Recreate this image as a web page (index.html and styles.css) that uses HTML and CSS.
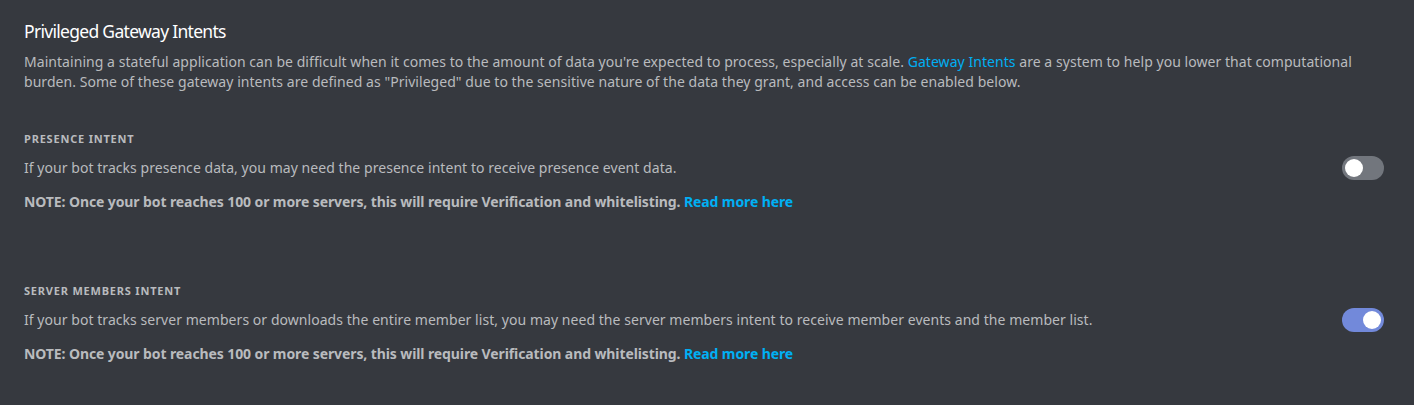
FILE: index.html
```html
<!DOCTYPE html>
<html>
<head>
<meta charset="utf-8">
<link rel="stylesheet" href="styles.css">
</head>
<body>
<div class="page">
  <h2 class="title">Privileged Gateway Intents</h2>
  <p class="desc">Maintaining a stateful application can be difficult when it comes to the amount of data you're expected to process, especially at scale. <a class="link" href="#">Gateway Intents</a> are a system to help you lower that computational burden. Some of these gateway intents are defined as "Privileged" due to the sensitive nature of the data they grant, and access can be enabled below.</p>

  <section class="intent">
    <h3 class="label">Presence Intent</h3>
    <div class="row">
      <p class="text">If your bot tracks presence data, you may need the presence intent to receive presence event data.</p>
      <div class="toggle"><div class="knob"></div></div>
    </div>
    <p class="note">NOTE: Once your bot reaches 100 or more servers, this will require Verification and whitelisting. <a class="more" href="#">Read more here</a></p>
  </section>

  <section class="intent">
    <h3 class="label">Server Members Intent</h3>
    <div class="row">
      <p class="text">If your bot tracks server members or downloads the entire member list, you may need the server members intent to receive member events and the member list.</p>
      <div class="toggle on"><div class="knob"></div></div>
    </div>
    <p class="note">NOTE: Once your bot reaches 100 or more servers, this will require Verification and whitelisting. <a class="more" href="#">Read more here</a></p>
  </section>
</div>
</body>
</html>
```
FILE: styles.css
```css
html, body {
  margin: 0;
  padding: 0;
  background: #36393f;
  height: 100%;
}
.page {
  padding: 19px 30px 0 24px;
  font-family: "Noto Sans", "Open Sans", sans-serif;
  color: #b9bbbe;
}
.title {
  margin: 0;
  font-size: 17.5px;
  line-height: 24px;
  font-weight: 400;
  letter-spacing: -0.7px;
  color: #ffffff;
}
.desc {
  margin: 9px 0 0 0;
  font-size: 14px;
  line-height: 20px;
  letter-spacing: 0.05px;
  color: #b9bbbe;
}
.link {
  color: #00aff4;
  text-decoration: none;
}
.label {
  margin: 0;
  padding-top: 39px;
  font-size: 11px;
  line-height: 16px;
  font-weight: 700;
  text-transform: uppercase;
  color: #b9bbbe;
  letter-spacing: 0.8px;
}
.intent + .intent .label {
  padding-top: 71px;
}
.row {
  display: flex;
  align-items: center;
  justify-content: space-between;
  margin-top: 9px;
}
.text {
  margin: 0;
  font-size: 14px;
  line-height: 20px;
  letter-spacing: 0.05px;
}
.note {
  margin: 12px 0 0 0;
  font-size: 14px;
  line-height: 20px;
  font-weight: 700;
  letter-spacing: -0.1px;
  color: #b9bbbe;
}
.more {
  color: #00b0f4;
  text-decoration: none;
}
.toggle {
  width: 42px;
  height: 24px;
  border-radius: 12px;
  background: #72767d;
  display: flex;
  align-items: center;
  padding: 0 3px;
  box-sizing: border-box;
  flex-shrink: 0;
}
.toggle.on {
  background: #7289da;
  justify-content: flex-end;
}
.knob {
  width: 18px;
  height: 18px;
  border-radius: 50%;
  background: #ffffff;
}
```
